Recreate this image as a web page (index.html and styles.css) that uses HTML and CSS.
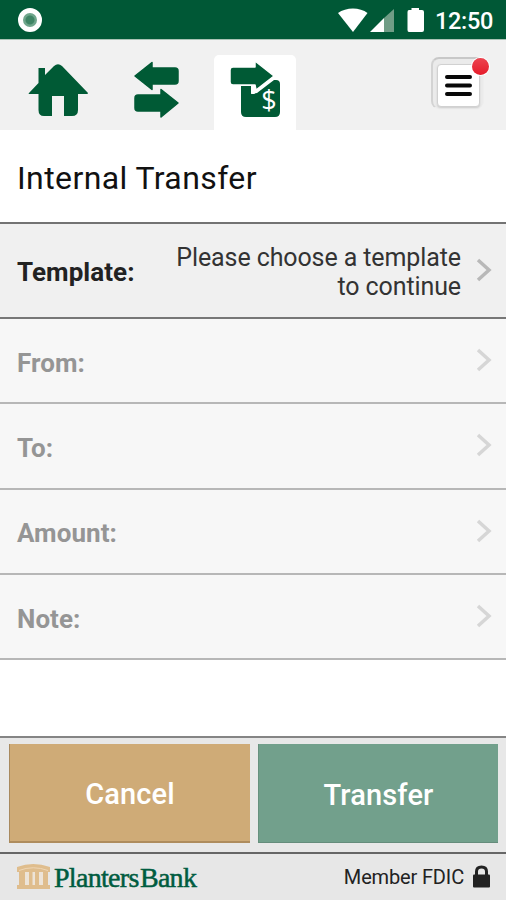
FILE: index.html
```html
<!DOCTYPE html>
<html lang="en">
<head>
<meta charset="utf-8">
<title>Internal Transfer</title>
<link rel="stylesheet" href="styles.css">
</head>
<body>
<div class="app">
  <header class="status">
    <span class="recorder"></span>
    <svg class="status-icons" width="88" height="26" viewBox="0 0 88 26">
      <path fill="#fff" d="M0 5C8-1 22-1 29.500 5L15 24Z"/>
      <path fill="#709d86" d="M46 10L56 1V24H46Z"/>
      <path fill="#fff" d="M32 24L46 10V24Z"/>
      <path fill="#fff" d="M73.500 0H81V2H84Q86 2 86 4V22Q86 24 84 24H71Q69.500 24 69.500 22V4Q69.500 2 71 2H73.500Z"/>
    </svg>
    <span class="clock">12:50</span>
  </header>
  <nav class="tabs">
    <a class="tab"><svg width="82" height="75" viewBox="0 0 82 75"><path fill="#005a35" d="M11 38L20.500 28V13H27V20L36 11Q40 7.500 44 11L70 38Q70 39 69 39H60V55Q60 61 54 61H46V41H34V61H26Q20.500 61 20.500 55V39H11Q10 39 11 38Z"/></svg></a>
    <a class="tab"><svg width="82" height="75" viewBox="0 0 82 75"><path fill="#005a35" stroke="#005a35" stroke-width="1.500" stroke-linejoin="round" d="M19 21L36 7.500V13H59Q62 13 62 16V26Q62 29 59 29H36V34.500ZM62 48L45 34.500V40H22Q19 40 19 43V53Q19 56 22 56H45V62Z"/></svg></a>
    <a class="tab active"><svg width="82" height="75" viewBox="0 0 82 75">
      <path fill="#005a35" d="M27 31H37V39L43 38L60 25H62Q66 25 66 29V57Q66 62 61 62H32Q27 62 27 57Z"/>
      <path fill="#005a35" stroke="#fff" stroke-width="1.500" stroke-linejoin="round" d="M19 12H41V6L60 21L42 35L41 30H19Q16 30 16 27V15Q16 12 19 12Z"/>
      <path fill="#fff" d="M37 30H41L42 35L60 21.500L61 23L40 39H38Z"/>
      <text class="dollar" x="55" y="55" text-anchor="middle">$</text></svg></a>
    <button class="menu" aria-label="Menu"><span class="menu-face"><svg width="27" height="24" viewBox="0 0 27 24"><path stroke="#080808" stroke-width="4" stroke-linecap="round" d="M2 3H25M2 11.500H25M2 20H25"/></svg></span><span class="alert"></span></button>
  </nav>
  <h1>Internal Transfer</h1>
  <main>
    <div class="row template"><b>Template:</b><span class="value">Please choose a template<br>to continue</span><svg class="chevron" width="16" height="24" viewBox="0 0 16 24"><path d="M2 2L13 12L2 22"/></svg></div>
    <div class="row"><b>From:</b><svg class="chevron" width="16" height="24" viewBox="0 0 16 24"><path d="M2 2L13 12L2 22"/></svg></div>
    <div class="row"><b>To:</b><svg class="chevron" width="16" height="24" viewBox="0 0 16 24"><path d="M2 2L13 12L2 22"/></svg></div>
    <div class="row"><b>Amount:</b><svg class="chevron" width="16" height="24" viewBox="0 0 16 24"><path d="M2 2L13 12L2 22"/></svg></div>
    <div class="row"><b>Note:</b><svg class="chevron" width="16" height="24" viewBox="0 0 16 24"><path d="M2 2L13 12L2 22"/></svg></div>
  </main>
  <div class="actions"><button class="cancel">Cancel</button><button class="transfer">Transfer</button></div>
  <footer>
    <svg width="33" height="25" viewBox="0 0 33 25"><path fill="#dfbd8d" d="M0 3Q16-3 33 3V8H31V21H33V25H0V21H2V8H0Z"/><path fill="#ede4d8" d="M8 8H12V21H8ZM15.500 8H18V21H15.500ZM22 8H26V21H22Z"/><path stroke="#efd6b5" d="M2 6.500Q16 1 31 6.500" fill="none"/></svg>
    <span class="brand">Planters Bank</span>
    <span class="member">Member FDIC</span>
    <svg class="lock" width="17" height="23" viewBox="0 0 17 23"><path fill="none" stroke="#222" stroke-width="3" d="M3.500 11V6.500Q3.500 2 8.500 2T13.500 6.500V11"/><rect y="9.500" width="17" height="13" rx="1" fill="#222"/></svg>
  </footer>
</div>
</body>
</html>
```

FILE: styles.css
```css
* { box-sizing: border-box; }
body { margin: 0; font-family: Roboto, "Liberation Sans", sans-serif; color: #222; }
.app { width: 506px; height: 900px; display: flex; flex-direction: column; background: #fff; overflow: hidden; }
svg { display: block; flex: none; }
button { border: 0; padding: 0; font-family: inherit; }

.status { height: 40px; flex: none; background: #005836; border-bottom: 1px solid #a9c3b5; display: flex; align-items: flex-start; padding: 8px 13px 0 18px; }
.recorder { width: 24px; height: 24px; border-radius: 50%; border: 5px solid #fff; background: radial-gradient(circle, #3f8565 0 4px, #6fa68c 5px); }
.status-icons { margin-left: auto; }
.clock { width: 58px; margin-left: 9px; color: #fff; font-size: 23.500px; font-weight: 500; line-height: 27px; letter-spacing: -.3px; white-space: nowrap; }

.tabs { height: 90px; flex: none; background: #f1f1f1; display: flex; align-items: flex-end; gap: 16px; padding-left: 18px; }
.tab { width: 82px; height: 75px; }
.active { background: #fff; border-radius: 5px 5px 0 0; }
.dollar { font: 27px "Open Sans", sans-serif; fill: #fff; }
.menu { position: relative; width: 53px; height: 52px; margin: 0 22px 21px auto; border-radius: 8px; background: #ebebeb; border: 1px solid #eee; border-top: 2px solid #c8c8c8; border-left: 2px solid #d3d3d3; display: flex; align-items: flex-start; padding: 5px 0 0 4px; }
.menu-face { width: 43px; height: 43px; border-radius: 4px; background: #fff; border: 1px solid #d1d1d1; box-shadow: 0 1px 2px #ccc; display: grid; place-items: center; }
.alert { position: absolute; right: -6px; top: -1px; width: 17px; height: 17px; border-radius: 50%; background: linear-gradient(#ed4450, #e51b2a); box-shadow: 0 0 0 1px #fff; }

h1 { height: 92px; flex: none; margin: 0; padding: 2px 17px 0; font-size: 32px; line-height: 92px; font-weight: 400; color: #111; letter-spacing: .4px; }
main { border-top: 2px solid #737373; }
.row { height: 85.333px; display: flex; align-items: center; justify-content: space-between; padding: 4px 14px 0 17px; border-bottom: 2px solid #b7b7b7; background: #f7f7f7; color: #959595; font-size: 26px; }
.row b { font-weight: 700; letter-spacing: .05px; }
.template { height: 95px; background: #f0f0f0; color: #222; border-bottom-color: #777; padding-top: 3px; }
.value { margin-left: auto; margin-right: 15px; text-align: right; font-size: 25px; line-height: 29px; letter-spacing: -.1px; color: #333; }
.chevron { fill: none; stroke: #d6d6d6; stroke-width: 3.500; margin-top: -5px; }
.template .chevron { stroke: #b8b8b8; }

.actions { height: 116px; flex: none; margin-top: auto; border-top: 2px solid #858585; background: #e8e8e8; display: grid; grid-template-columns: 241px 240px; gap: 8px; padding: 6px 9px 9px; }
.actions button { height: 99px; color: #fff; font-size: 29px; font-weight: 500; padding-top: 3px; letter-spacing: .15px; }
.cancel { background: #cfab77; border-left: 1px solid #a8895e; border-bottom: 2px solid #ae8c5d; }
.transfer { background: #72a08c; border-left: 1px solid #67917e; border-bottom: 1px solid #658c7b; }
footer { height: 48px; flex: none; border-top: 2px solid #666; background: #e7e7e7; display: flex; align-items: flex-start; padding: 10px 16px 0 17px; }
.brand { margin: -1px 0 0 4px; font: 28px/30px "Liberation Serif", serif; color: #005c40; letter-spacing: -.7px; word-spacing: -5px; white-space: nowrap; -webkit-text-stroke: .5px #005c40; }
.member { margin: -1px 9px 0 auto; font-size: 20px; line-height: 29px; white-space: nowrap; letter-spacing: -.15px; }
.lock { margin-top: 1px; }
```
